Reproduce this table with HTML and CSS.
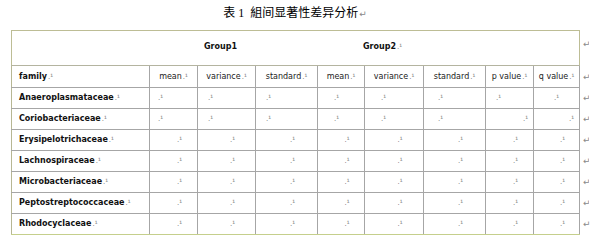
FILE: index.html
```html
<!DOCTYPE html>
<html>
<head>
<meta charset="utf-8">
<link rel="stylesheet" href="styles.css">
</head>
<body>
<div class="page">
  <h1 class="title">表 1&nbsp; 組间显著性差异分析<span class="ret">↵</span></h1>
  <table class="grid">
    <colgroup>
      <col class="w-fam"><col class="w-48"><col class="w-58"><col class="w-62"><col class="w-47"><col class="w-59"><col class="w-62"><col class="w-48"><col class="w-46"><col class="w-end">
    </colgroup>
    <tr class="r-group">
      <td colspan="9" class="group"><span class="g1">Group1</span><span class="g2">Group2<span class="m">.¹</span></span></td>
      <td class="eol top">↵</td>
    </tr>
    <tr class="r-head">
      <td class="fam b-first">family<span class="m">.¹</span></td>
      <td class="hd">mean<span class="m">.¹</span></td>
      <td class="hd">variance<span class="m">.¹</span></td>
      <td class="hd">standard<span class="m">.¹</span></td>
      <td class="hd">mean<span class="m">.¹</span></td>
      <td class="hd">variance<span class="m">.¹</span></td>
      <td class="hd">standard<span class="m">.¹</span></td>
      <td class="hd">p value<span class="m">.¹</span></td>
      <td class="hd last">q value<span class="m">.¹</span></td>
      <td class="eol">↵</td>
    </tr>
    <tr>
      <td class="fam">Anaeroplasmataceae<span class="m">.¹</span></td>
      <td class="lf"><span class="m">.¹</span></td>
      <td class="lf2"><span class="m">.¹</span></td>
      <td class="lf2"><span class="m">.¹</span></td>
      <td class="lf3"><span class="m">.¹</span></td>
      <td class="lf3"><span class="m">.¹</span></td>
      <td class="lf4"><span class="m">.¹</span></td>
      <td class="lf2"><span class="m">.¹</span></td>
      <td class="lf5 last"><span class="m">.¹</span></td>
      <td class="eol">↵</td>
    </tr>
    <tr>
      <td class="fam">Coriobacteriaceae<span class="m">.¹</span></td>
      <td class="lf"><span class="m">.¹</span></td>
      <td class="lf2"><span class="m">.¹</span></td>
      <td class="lf2"><span class="m">.¹</span></td>
      <td class="lf3"><span class="m">.¹</span></td>
      <td class="lf3"><span class="m">.¹</span></td>
      <td class="lf4"><span class="m">.¹</span></td>
      <td class="rt"><span class="m">.¹</span></td>
      <td class="rt last"><span class="m">.¹</span></td>
      <td class="eol">↵</td>
    </tr>
    <tr>
      <td class="fam">Erysipelotrichaceae<span class="m">.¹</span></td>
      <td class="ct"><span class="m">.¹</span></td>
      <td class="ct"><span class="m">.¹</span></td>
      <td class="ct"><span class="m">.¹</span></td>
      <td class="ct"><span class="m">.¹</span></td>
      <td class="ct"><span class="m">.¹</span></td>
      <td class="ct"><span class="m">.¹</span></td>
      <td class="ct"><span class="m">.¹</span></td>
      <td class="ct last"><span class="m">.¹</span></td>
      <td class="eol">↵</td>
    </tr>
    <tr>
      <td class="fam">Lachnospiraceae<span class="m">.¹</span></td>
      <td class="ct"><span class="m">.¹</span></td>
      <td class="ct"><span class="m">.¹</span></td>
      <td class="ct"><span class="m">.¹</span></td>
      <td class="ct"><span class="m">.¹</span></td>
      <td class="ct"><span class="m">.¹</span></td>
      <td class="ct"><span class="m">.¹</span></td>
      <td class="ct"><span class="m">.¹</span></td>
      <td class="ct last"><span class="m">.¹</span></td>
      <td class="eol">↵</td>
    </tr>
    <tr>
      <td class="fam">Microbacteriaceae<span class="m">.¹</span></td>
      <td class="ct"><span class="m">.¹</span></td>
      <td class="ct"><span class="m">.¹</span></td>
      <td class="ct"><span class="m">.¹</span></td>
      <td class="ct"><span class="m">.¹</span></td>
      <td class="ct"><span class="m">.¹</span></td>
      <td class="ct"><span class="m">.¹</span></td>
      <td class="ct"><span class="m">.¹</span></td>
      <td class="ct last"><span class="m">.¹</span></td>
      <td class="eol">↵</td>
    </tr>
    <tr>
      <td class="fam">Peptostreptococcaceae<span class="m">.¹</span></td>
      <td class="ct"><span class="m">.¹</span></td>
      <td class="ct"><span class="m">.¹</span></td>
      <td class="ct"><span class="m">.¹</span></td>
      <td class="ct"><span class="m">.¹</span></td>
      <td class="ct"><span class="m">.¹</span></td>
      <td class="ct"><span class="m">.¹</span></td>
      <td class="ct"><span class="m">.¹</span></td>
      <td class="ct last"><span class="m">.¹</span></td>
      <td class="eol">↵</td>
    </tr>
    <tr class="r-last">
      <td class="fam">Rhodocyclaceae<span class="m">.¹</span></td>
      <td class="ct"><span class="m">.¹</span></td>
      <td class="ct"><span class="m">.¹</span></td>
      <td class="ct"><span class="m">.¹</span></td>
      <td class="ct"><span class="m">.¹</span></td>
      <td class="ct"><span class="m">.¹</span></td>
      <td class="ct"><span class="m">.¹</span></td>
      <td class="ct"><span class="m">.¹</span></td>
      <td class="ct last"><span class="m">.¹</span></td>
      <td class="eol">↵</td>
    </tr>
  </table>
</div>
</body>
</html>
```
FILE: styles.css
```css
html, body {
  margin: 0;
  padding: 0;
  background: #ffffff;
}

.page {
  width: 590px;
  height: 244px;
  overflow: hidden;
  font-family: "DejaVu Sans", sans-serif;
  color: #111;
}

.title {
  margin: 0;
  height: 30px;
  box-sizing: border-box;
  padding: 5px 0 0 0;
  text-align: center;
  font-family: "Liberation Serif", "Noto Sans CJK SC", serif;
  font-weight: normal;
  font-size: 12px;
  line-height: 16px;
  color: #000;
}

.title .ret {
  font-family: "DejaVu Sans", sans-serif;
  font-size: 9px;
  color: #888;
  margin-left: 1px;
}

.grid {
  margin-left: 11px;
  border-collapse: collapse;
  table-layout: fixed;
  width: 579px;
  font-size: 8px;
}

.w-fam { width: 138px; }
.w-48 { width: 48px; }
.w-58 { width: 58px; }
.w-62 { width: 62px; }
.w-47 { width: 47px; }
.w-59 { width: 59px; }
.w-46 { width: 46px; }
.w-end { width: 10px; }

.grid td {
  border: 1px solid #a6a6a6;
  padding: 0;
  height: 20px;
  line-height: 12px;
  white-space: nowrap;
  overflow: hidden;
  vertical-align: middle;
  color: #222;
}

.grid td.eol {
  border: none;
  color: #8a8a8a;
  font-size: 9px;
  padding-left: 3px;
  text-align: left;
}

.grid td.eol.top {
  vertical-align: top;
  padding-top: 7px;
}

.grid td.fam {
  font-weight: bold;
  color: #111;
  padding-left: 7px;
  border-left-color: #b7b794;
}

.r-group td.group {
  height: 32px;
  border-color: #bdbd95;
  border-bottom-color: #b4b4a0;
  font-weight: bold;
  color: #111;
  padding-left: 192px;
  padding-bottom: 2px;
}

.g2 {
  margin-left: 126px;
}

.r-head td {
  height: 21px;
  border-top-color: #b4b4a0;
}

.hd {
  text-align: center;
}

.r-last td {
  border-bottom-color: #c5cf8c;
}

.lf { padding-left: 7px !important; }
.lf2 { padding-left: 9px !important; }
.lf3 { padding-left: 15px !important; }
.lf4 { padding-left: 13px !important; }
.lf5 { padding-left: 19px !important; }
.rt { text-align: right; padding-right: 5px !important; }
.ct { text-align: center; padding-left: 11px !important; }

.m {
  font-size: 7px;
  color: #777;
  font-weight: normal;
  margin-left: 1px;
}
```
